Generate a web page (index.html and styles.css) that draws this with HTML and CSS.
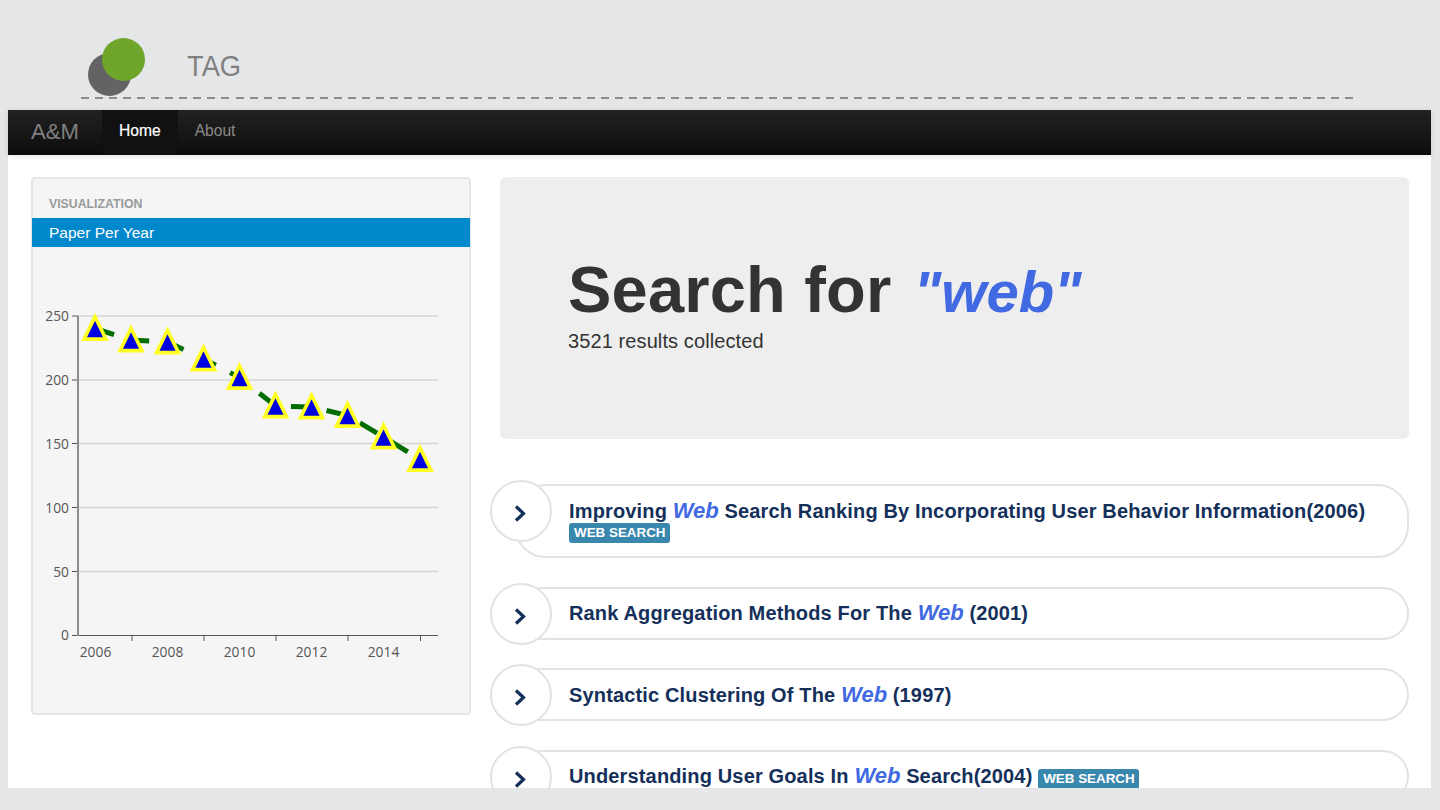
FILE: index.html
```html
<!DOCTYPE html>
<html lang="en">
<head>
<meta charset="utf-8">
<title>TAG</title>
<link rel="stylesheet" href="styles.css">
</head>
<body>
<header class="brandbar">
  <div class="brandrow">
    <div class="logo"><span class="dot dot-gray"></span><span class="dot dot-green"></span></div>
    <div class="tag">TAG</div>
  </div>
  <div class="dashes"></div>
</header>
<nav class="navbar">
  <a class="brand">A&amp;M</a>
  <a class="navlink active">Home</a>
  <a class="navlink">About</a>
</nav>
<main class="main">
  <aside class="well">
    <div class="navhead">VISUALIZATION</div>
    <div class="navitem">Paper Per Year</div>
    <svg class="chart" width="436" height="466" viewBox="33 247 436 466">
      <g class="grid">
        <line x1="78" x2="438" y1="316" y2="316"/>
        <line x1="78" x2="438" y1="380" y2="380"/>
        <line x1="78" x2="438" y1="443.5" y2="443.5"/>
        <line x1="78" x2="438" y1="507.5" y2="507.5"/>
        <line x1="78" x2="438" y1="571.5" y2="571.5"/>
      </g>
      <g class="ticks">
        <line x1="72" x2="78" y1="316" y2="316"/>
        <line x1="72" x2="78" y1="380" y2="380"/>
        <line x1="72" x2="78" y1="443.5" y2="443.5"/>
        <line x1="72" x2="78" y1="507.5" y2="507.5"/>
        <line x1="72" x2="78" y1="571.5" y2="571.5"/>
        <line x1="72" x2="438" y1="635.5" y2="635.5"/>
        <line x1="132" x2="132" y1="635" y2="641"/>
        <line x1="204" x2="204" y1="635" y2="641"/>
        <line x1="276" x2="276" y1="635" y2="641"/>
        <line x1="348" x2="348" y1="635" y2="641"/>
        <line x1="420.5" x2="420.5" y1="635" y2="641"/>
      </g>
      <line class="yaxis" x1="78" x2="78" y1="316" y2="636"/>
      <g class="labels-y">
        <text x="69" y="321">250</text>
        <text x="69" y="385">200</text>
        <text x="69" y="449">150</text>
        <text x="69" y="513">100</text>
        <text x="69" y="577">50</text>
        <text x="69" y="640">0</text>
      </g>
      <g class="labels-x">
        <text x="95.5" y="656.5">2006</text>
        <text x="167.5" y="656.5">2008</text>
        <text x="239.5" y="656.5">2010</text>
        <text x="311.5" y="656.5">2012</text>
        <text x="383.5" y="656.5">2014</text>
      </g>
      <polyline class="trend" points="95,328.5 131,340 167.5,342 203.5,359 239.5,377.5 275.5,406 311.5,407 347.5,415.5 383.5,437 420,459.5"/>
      <g class="marks">
        <polygon transform="translate(95 328.5)" points="0,-11.7 11,10.6 -11,10.6"/>
        <polygon transform="translate(131 340)" points="0,-11.7 11,10.6 -11,10.6"/>
        <polygon transform="translate(167.5 342)" points="0,-11.7 11,10.6 -11,10.6"/>
        <polygon transform="translate(203.5 359)" points="0,-11.7 11,10.6 -11,10.6"/>
        <polygon transform="translate(239.5 377.5)" points="0,-11.7 11,10.6 -11,10.6"/>
        <polygon transform="translate(275.5 406)" points="0,-11.7 11,10.6 -11,10.6"/>
        <polygon transform="translate(311.5 407)" points="0,-11.7 11,10.6 -11,10.6"/>
        <polygon transform="translate(347.5 415.5)" points="0,-11.7 11,10.6 -11,10.6"/>
        <polygon transform="translate(383.5 437)" points="0,-11.7 11,10.6 -11,10.6"/>
        <polygon transform="translate(420 459.5)" points="0,-11.7 11,10.6 -11,10.6"/>
      </g>
    </svg>
  </aside>
  <section class="content">
    <div class="hero">
      <h1 class="hero-title">Search for <em class="query">"web"</em></h1>
      <p class="hero-sub">3521 results collected</p>
    </div>
    <ul class="results">
      <li class="result result-tall">
        <span class="toggle"><svg class="chev" width="12" height="17" viewBox="0 0 12 17"><path d="M2 1.5l7.5 7-7.5 7"/></svg></span>
        <div class="pill">
          <div>
            <div class="title">Improving <em class="hit">Web</em> Search Ranking By Incorporating User Behavior Information(2006)</div>
            <div class="labelrow"><span class="label">WEB SEARCH</span></div>
          </div>
        </div>
      </li>
      <li class="result">
        <span class="toggle"><svg class="chev" width="12" height="17" viewBox="0 0 12 17"><path d="M2 1.5l7.5 7-7.5 7"/></svg></span>
        <div class="pill"><div class="title">Rank Aggregation Methods For The <em class="hit">Web</em> (2001)</div></div>
      </li>
      <li class="result">
        <span class="toggle"><svg class="chev" width="12" height="17" viewBox="0 0 12 17"><path d="M2 1.5l7.5 7-7.5 7"/></svg></span>
        <div class="pill"><div class="title">Syntactic Clustering Of The <em class="hit">Web</em> (1997)</div></div>
      </li>
      <li class="result">
        <span class="toggle"><svg class="chev" width="12" height="17" viewBox="0 0 12 17"><path d="M2 1.5l7.5 7-7.5 7"/></svg></span>
        <div class="pill"><div class="title">Understanding User Goals In <em class="hit">Web</em> Search(2004) <span class="label">WEB SEARCH</span></div></div>
      </li>
    </ul>
  </section>
</main>
</body>
</html>
```
FILE: styles.css
```css
* { box-sizing: border-box; }
html, body { height: 100%; overflow: hidden; }
body {
  margin: 0;
  background: #e5e6e8;
  font-family: "Liberation Sans", Arial, sans-serif;
}
.brandbar { height: 110px; padding: 38px 0 0 81px; }
.brandrow { display: flex; height: 59px; padding-left: 7px; }
.logo { position: relative; width: 57px; height: 58px; }
.dot { position: absolute; width: 43px; height: 43px; border-radius: 50%; }
.dot-gray { left: 0; top: 15px; background: #636365; }
.dot-green { left: 14px; top: 0; background: #6ea52a; }
.tag {
  margin: 9px 0 0 42px;
  font-size: 30px;
  line-height: 38px;
  color: #808080;
  transform: scaleX(0.91);
  transform-origin: left center;
}
.dashes {
  width: 1272px;
  height: 2px;
  background: repeating-linear-gradient(to right, #8c8c8c 0 8px, transparent 8px 14.05px);
}
.navbar {
  display: flex;
  align-items: stretch;
  height: 45px;
  margin: 0 9px 0 8px;
  background: linear-gradient(#222222, #0c0c0c);
  box-shadow: 0 1px 6px rgba(0, 0, 0, 0.12);
  position: relative;
}
.brand {
  padding: 0 23px 0 23px;
  font-size: 22.2px;
  line-height: 43px;
  color: #808080;
}
.navlink {
  padding: 0 17px;
  font-size: 15.6px;
  line-height: 41px;
  color: #8a8a8a;
}
.navlink.active {
  background: #111111;
  color: #ffffff;
  -webkit-text-stroke: 0.2px #ffffff;
}
.main {
  display: flex;
  gap: 29px;
  height: 633px;
  margin: 0 9px 0 8px;
  padding: 22px 22px 0 23px;
  background: #ffffff;
  overflow: hidden;
}
.well {
  flex: none;
  width: 440px;
  height: 538px;
  padding-top: 17px;
  background: #f5f5f5;
  border: 2px solid #e6e6e6;
  border-radius: 4px;
}
.navhead {
  padding-left: 16px;
  font-size: 12.3px;
  font-weight: bold;
  line-height: 16px;
  color: #999999;
}
.navitem {
  height: 29px;
  margin: 6px -1px 0;
  padding-left: 17px;
  font-size: 15.5px;
  line-height: 29px;
  color: #ffffff;
  background: #0088cc;
}
.chart { display: block; }
.grid line { stroke: #d4d4d4; stroke-width: 1.5; }
.ticks line { stroke: #555555; stroke-width: 1; }
.yaxis { stroke: #8c8c8c; stroke-width: 2; }
.labels-y text, .labels-x text {
  font-family: "Open Sans", sans-serif;
  font-size: 13.8px;
  fill: #555555;
}
.labels-y text { text-anchor: end; }
.labels-x text { text-anchor: middle; }
.trend {
  fill: none;
  stroke: #006e00;
  stroke-width: 5;
  stroke-dasharray: 20 16;
}
.marks polygon {
  fill: #0000e0;
  stroke: #ffff22;
  stroke-width: 3.6;
}
.content { flex: 1; min-width: 0; }
.hero {
  height: 262px;
  padding: 80px 0 0 68px;
  background: #eeeeee;
  border-radius: 6px;
}
.hero-title {
  margin: 0;
  font-size: 65px;
  line-height: 66px;
  font-weight: bold;
  letter-spacing: 0.2px;
  color: #333333;
}
.query {
  margin-left: 4px;
  font-size: 58px;
  letter-spacing: 0;
  color: #4169e1;
}
.hero-sub {
  margin: 4px 0 0;
  font-size: 20px;
  line-height: 24px;
  letter-spacing: 0.1px;
  color: #333333;
}
.results {
  display: flex;
  flex-direction: column;
  gap: 28.5px;
  margin: 45px 0 0;
  padding: 0;
  list-style: none;
}
.result { position: relative; margin-left: 14px; }
.toggle {
  position: absolute;
  left: -24px;
  top: -4px;
  display: flex;
  align-items: center;
  justify-content: center;
  width: 62px;
  height: 62px;
  padding: 5px 3px 0 0;
  background: #ffffff;
  border: 2px solid #e3e3e3;
  border-radius: 50%;
}
.chev path { fill: none; stroke: #14305a; stroke-width: 3.2; }
.pill {
  display: flex;
  align-items: center;
  min-height: 53px;
  padding: 0 0 0 53px;
  background: #ffffff;
  border: 2px solid #e3e3e3;
  border-radius: 32px;
}
.result-tall .pill { height: 74px; padding-bottom: 1px; }
.title {
  font-size: 20px;
  font-weight: bold;
  line-height: 26px;
  letter-spacing: 0.15px;
  color: #14305a;
  white-space: nowrap;
}
.hit {
  font-size: 22px;
  font-weight: bold;
  letter-spacing: 0;
  color: #4169e1;
}
.labelrow { display: flex; height: 20px; margin-top: -1px; }
.label {
  display: inline-block;
  height: 20px;
  padding: 0 4px 0 5px;
  font-size: 13.4px;
  font-weight: bold;
  line-height: 20px;
  letter-spacing: 0;
  color: #ffffff;
  background: #3a87ad;
  border-radius: 3px;
}
```
